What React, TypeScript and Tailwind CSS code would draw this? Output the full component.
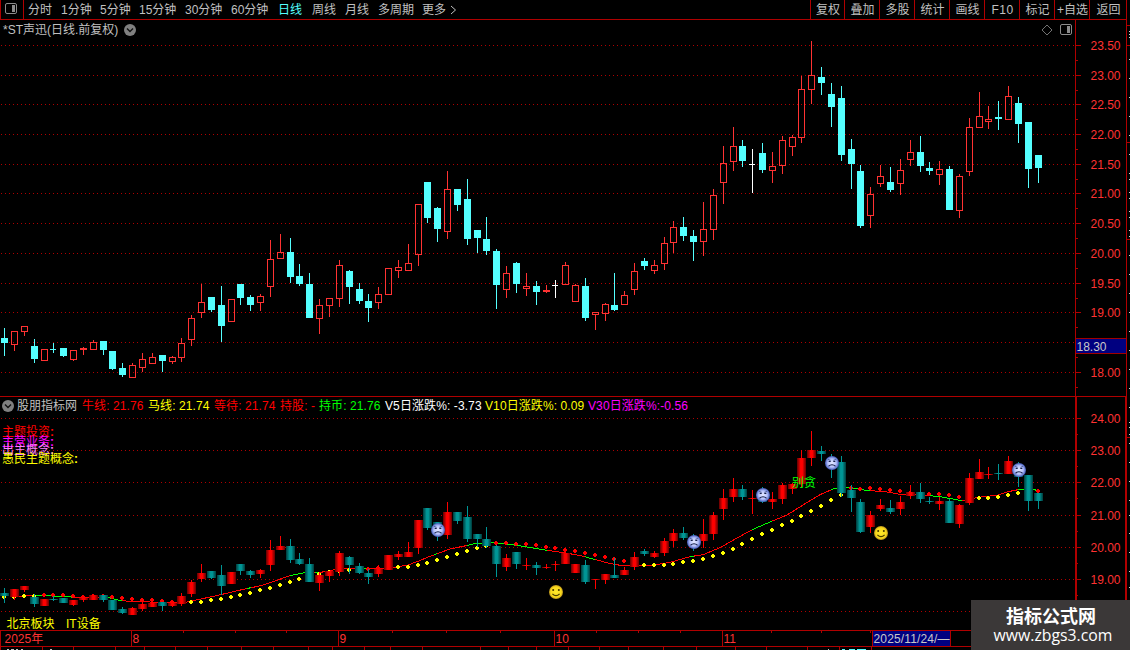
import { clsx } from "clsx";

type Kind = "r" | "c" | "w";
// x, high, body top, body bottom, low, kind
type Candle = [number, number, number, number, number, Kind];

const candles: Candle[] = [
    [4, 328, 338, 343, 356, "c"], [14, 331, 331, 345, 351, "r"], [24, 326, 326, 332, 336, "r"],
    [34, 339, 346, 359, 363, "c"], [44, 349, 349, 361, 361, "r"], [53, 343, 349, 350, 353, "c"],
    [63, 348, 348, 356, 357, "c"], [73, 350, 350, 360, 361, "r"], [83, 347, 348, 350, 355, "r"],
    [93, 340, 342, 350, 350, "r"], [103, 341, 341, 350, 355, "c"], [112, 351, 351, 369, 370, "c"],
    [122, 363, 368, 375, 377, "c"], [132, 363, 365, 378, 378, "r"], [142, 353, 359, 368, 372, "r"],
    [152, 353, 357, 364, 364, "r"], [162, 355, 355, 361, 372, "c"], [172, 356, 357, 362, 364, "r"],
    [181, 338, 343, 358, 362, "r"], [191, 315, 318, 340, 346, "r"], [201, 284, 302, 313, 318, "r"],
    [211, 297, 297, 310, 312, "c"], [221, 286, 305, 326, 342, "c"], [231, 299, 299, 322, 322, "r"],
    [240, 284, 284, 298, 305, "c"], [250, 295, 297, 305, 311, "c"], [260, 294, 296, 303, 311, "r"],
    [270, 240, 259, 287, 297, "r"], [280, 234, 252, 259, 259, "r"], [290, 238, 252, 277, 283, "c"],
    [299, 264, 276, 284, 286, "c"], [309, 273, 284, 318, 318, "c"], [319, 299, 305, 319, 334, "r"],
    [329, 298, 298, 306, 317, "r"], [339, 260, 265, 299, 307, "r"], [349, 270, 271, 287, 304, "c"],
    [359, 283, 289, 301, 304, "c"], [368, 294, 301, 308, 322, "c"], [378, 287, 294, 303, 309, "r"],
    [388, 268, 268, 295, 295, "r"], [398, 260, 267, 271, 278, "r"], [408, 244, 263, 271, 271, "r"],
    [418, 204, 204, 255, 266, "r"], [427, 182, 182, 218, 223, "c"], [437, 207, 208, 229, 242, "c"],
    [447, 171, 189, 232, 239, "r"], [457, 189, 189, 205, 211, "c"], [467, 179, 199, 239, 245, "c"],
    [477, 230, 230, 238, 253, "c"], [486, 217, 239, 251, 255, "c"], [496, 249, 251, 285, 309, "c"],
    [506, 266, 273, 290, 298, "r"], [516, 262, 263, 284, 293, "c"], [526, 273, 286, 289, 296, "r"],
    [536, 281, 286, 292, 305, "c"], [546, 285, 290, 292, 293, "r"], [555, 280, 285, 286, 298, "w"],
    [565, 262, 265, 285, 285, "r"], [575, 284, 285, 302, 302, "r"], [585, 278, 286, 318, 321, "c"],
    [595, 312, 312, 315, 330, "r"], [605, 303, 304, 314, 321, "r"], [614, 273, 305, 310, 311, "c"],
    [624, 291, 295, 305, 305, "r"], [634, 263, 271, 290, 295, "r"], [644, 258, 261, 266, 270, "c"],
    [654, 260, 265, 271, 274, "r"], [664, 237, 243, 264, 270, "r"], [673, 221, 227, 243, 253, "r"],
    [683, 217, 227, 236, 241, "c"], [693, 230, 236, 242, 261, "c"], [703, 202, 229, 242, 256, "r"],
    [713, 189, 195, 230, 240, "r"], [723, 146, 163, 183, 204, "r"], [733, 127, 146, 162, 171, "r"],
    [742, 140, 146, 161, 167, "c"], [752, 149, 164, 165, 193, "w"], [762, 143, 153, 170, 173, "c"],
    [772, 152, 166, 171, 183, "r"], [782, 136, 140, 166, 174, "r"], [792, 135, 137, 147, 156, "r"],
    [801, 76, 89, 138, 143, "r"], [811, 41, 75, 90, 104, "r"], [821, 67, 77, 83, 95, "c"],
    [831, 83, 94, 107, 127, "c"], [841, 86, 98, 155, 161, "c"], [851, 139, 149, 164, 189, "c"],
    [860, 165, 171, 226, 228, "c"], [870, 187, 194, 216, 228, "r"], [880, 165, 176, 184, 187, "r"],
    [890, 167, 182, 190, 192, "c"], [900, 159, 170, 184, 195, "r"], [910, 140, 152, 160, 166, "r"],
    [920, 136, 152, 166, 172, "c"], [929, 162, 168, 171, 175, "c"], [939, 161, 169, 175, 185, "r"],
    [949, 166, 169, 210, 210, "c"], [959, 174, 176, 211, 218, "r"], [969, 118, 127, 172, 176, "r"],
    [979, 92, 116, 128, 128, "r"], [988, 106, 119, 122, 129, "r"], [998, 101, 117, 119, 130, "c"],
    [1008, 86, 96, 120, 120, "r"], [1018, 97, 103, 124, 143, "c"], [1028, 122, 122, 169, 188, "c"],
    [1038, 155, 155, 168, 183, "c"],
];

const curve: [number, number][] = [
    [10, 596.5], [35, 595.5], [68, 596.5], [74, 597.5], [97, 597.5], [108, 597.5], [118, 600], [130, 601.5],
    [150, 602], [165, 602.5], [185, 602.5], [196, 600], [215, 596], [230, 592.5], [247, 588.5], [262, 585.5],
    [275, 581], [290, 575.5], [303, 573], [320, 572.5], [333, 570], [345, 568.6], [390, 568.5], [402, 566],
    [408, 565], [420, 560.5], [427, 557.5], [435, 554.5], [450, 549], [457, 547.5], [467, 545.5], [475, 543.5],
    [483, 543], [492, 542.7], [507, 544], [520, 545.8], [533, 548], [547, 550.3], [563, 552.5], [580, 555.5],
    [595, 559.5], [608, 563], [620, 565.3], [653, 565.3], [670, 562.3], [690, 556.7], [703, 554.7], [720, 547.7],
    [737, 538], [753, 529.3], [770, 522], [787, 515], [803, 505], [820, 494.7], [833, 489], [847, 487.5],
    [857, 488.3], [867, 490.7], [883, 491.3], [900, 494.3], [923, 495], [940, 496.7], [960, 500.3], [965, 500.3],
    [978, 497.3], [997, 495.3], [1008, 491.7], [1020, 489.3], [1033, 489.3], [1038, 490.7],
];

const greenSpans = [
    [34, 73], [108, 122], [247, 251], [290, 305], [315, 320], [364, 368], [434, 437], [467, 547],
    [585, 595], [690, 694], [752, 772], [831, 870], [930, 962], [1018, 1038],
];

// one dot per candle: negative values are red dots, positive are yellow
const dots = [
    597, 597, 596, 596, -595, -595, -595, -596, -597, -596, -596, -597, -598, -599, -600, -600, -601, -602, -602,
    602, 602, 600, 599, 597, 595, 593, 590, 588, 585, 582, 579, 576, 574, 572, 571, 570, -569, -569, -568, -568,
    567, 567, 565, 563, 560, 557, 554, 551, 548, 546, -543, -543, -544, -544, -545, -547, -548, -550, -551, -553,
    -555, -557, -559, -561, -562, 565, 565, 565, 564, 562, 561, 559, 556, 553, 549, 544, 539, 534, 530, 525, 521,
    516, 511, 506, 500, 495, -488, -489, -488, -489, -490, -491, -493, -494, -494, -494, -495, -497, 499, 498, 498,
    497, 495, 493, -490, -491,
];

const upperScale: [number, string][] = [
    [45, "23.50"], [75, "23.00"], [104, "22.50"], [134, "22.00"], [164, "21.50"], [193, "21.00"],
    [223, "20.50"], [253, "20.00"], [283, "19.50"], [312, "19.00"], [342, ""], [372, "18.00"],
];
const lowerScale: [number, string][] = [
    [418, "24.00"], [450, "23.00"], [482, "22.00"], [515, "21.00"], [547, "20.00"], [579, "19.00"], [611, ""],
];

const periods = [
    ["分时", "w-[33px]"], ["1分钟", "w-[39px]"], ["5分钟", "w-[39px]"], ["15分钟", "w-[46px]"],
    ["30分钟", "w-[46px]"], ["60分钟", "w-[47px]"], ["日线", "w-[34px]"], ["周线", "w-[33px]"],
    ["月线", "w-[33px]"], ["多周期", "w-[44px]"], ["更多", "w-[28px]"],
];

const actions = [
    ["复权", "w-[34px]"], ["叠加", "w-[35px]"], ["多股", "w-[35px]"], ["统计", "w-[35px]"], ["画线", "w-[35px]"],
    ["F10", "w-[35px] tracking-[0.5px]"], ["标记", "w-[35px]"], ["+自选", "w-[35px]"], ["返回", "w-[37px]"],
];

const readings = [
    ["牛线: 21.76", "w-[66px] text-[#ff0000]"],
    ["马线: 21.74", "w-[66px] text-[#ffff00]"],
    ["等待: 21.74", "w-[66px] text-[#ff0000]"],
    ["持股: -", "w-[39px] text-[#ff0000]"],
    ["持币: 21.76", "w-[66px] text-[#00ff00]"],
    ["V5日涨跌%: -3.73", "w-[100px] text-white"],
    ["V10日涨跌%: 0.09", "w-[103px] text-[#ffff00]"],
    ["V30日涨跌%:-0.56", "w-[110px] text-[#ff00ff]"],
];

// themes stacked on top of each other in the indicator panel: baseline, colour, text
const themes: [number, string, string][] = [
    [436, "#ff0000", "主题投资"],
    [446, "#ff00ff", "主营业务"],
    [454, "#ff80ff", "出主概念"],
    [463, "#ffff00", "愚民主题概念"],
];

// price panel y -> indicator panel y
const toLower = (y: number) => Math.round(433.6 + (y - 45) * 0.544);

function curveY(x: number) {
    for (let i = 1; i < curve.length; i++) {
        const [x0, y0] = curve[i - 1];
        const [x1, y1] = curve[i];
        if (x <= x1) return y0 + ((y1 - y0) * (x - x0)) / (x1 - x0);
    }
    return curve[curve.length - 1][1];
}

function spanPoints(from: number, to: number) {
    const inner = curve.filter(([x]) => x > from && x < to);
    return [[from, curveY(from)], ...inner, [to, curveY(to)]].map((p) => p.join(",")).join(" ");
}

function GridLines({ rows }: { rows: [number, string][] }) {
    return (
        <>
            {rows.map(([y]) => (
                <line key={y} x1={1} x2={1075} y1={y + 0.5} y2={y + 0.5} stroke="#b00000" strokeDasharray="1 3" />
            ))}
        </>
    );
}

function PanelIcon() {
    return (
        <svg width="12" height="11" viewBox="0 0 12 11" className="shrink-0">
            <rect x="0.5" y="0.5" width="11" height="10" rx="1.5" fill="none" stroke="#8c8c8c" />
            <rect x="7" y="2" width="3" height="7" fill="#8c8c8c" />
        </svg>
    );
}

function RoundChevron() {
    return (
        <svg width="12" height="12" viewBox="0 0 12 12" className="shrink-0">
            <circle cx="6" cy="6" r="6" fill="#808080" />
            <path d="M3 4.5 L6 7.5 L9 4.5" fill="none" stroke="#111" strokeWidth="1.4" />
        </svg>
    );
}

function PriceChart() {
    const colors = { r: "#ff3232", c: "#54ffff", w: "#ffffff" };
    return (
        <svg width="1075" height="356" viewBox="0 40 1075 356" shapeRendering="crispEdges" className="block">
            <GridLines rows={upperScale} />
            {candles.map(([x, hi, top, bot, lo, kind]) => (
                <g key={x} fill={colors[kind]}>
                    {hi < top && <rect x={x} y={hi} width={1} height={top - hi} />}
                    {lo > bot && <rect x={x} y={bot} width={1} height={lo - bot} />}
                    {kind === "r" && bot - top > 2 ? (
                        <rect x={x - 2.5} y={top + 0.5} width={6} height={bot - top - 1} fill="none" stroke="#ff3232" />
                    ) : (
                        <rect x={x - 3} y={top} width={kind === "w" || bot - top === 1 ? 6 : 7} height={bot - top} />
                    )}
                </g>
            ))}
        </svg>
    );
}

function Sad({ x, y }: { x: number; y: number }) {
    return (
        <g transform={`translate(${x} ${y})`}>
            <circle r="7" fill="url(#sad)" />
            <path d="M-4 -3.6 L-1.5 -2.8 M4 -3.6 L1.5 -2.8" stroke="#3a4a80" strokeWidth="0.7" />
            <path d="M-3.3 -1.6 h2 M1.3 -1.6 h2" stroke="#16204a" strokeWidth="1.4" />
            <path d="M-3.5 3.2 Q0 0.4 3.5 3.2" fill="none" stroke="#16204a" strokeWidth="1.1" />
        </g>
    );
}

function Happy({ x, y }: { x: number; y: number }) {
    return (
        <g transform={`translate(${x} ${y})`}>
            <circle r="7" fill="url(#happy)" />
            <path d="M-2.8 -3 v2 M2.8 -3 v2" stroke="#5a4a00" strokeWidth="1.7" />
            <path d="M-3.6 1.8 Q0 5.6 3.6 1.8" fill="none" stroke="#4a3c00" strokeWidth="1.2" />
        </g>
    );
}

function IndicatorChart() {
    return (
        <svg width="1075" height="216" viewBox="0 414 1075 216" className="block text-[12px]">
            <defs>
                <linearGradient id="red">
                    <stop offset="0" stopColor="#600000" />
                    <stop offset="0.4" stopColor="#ff0000" />
                    <stop offset="0.6" stopColor="#ff0000" />
                    <stop offset="1" stopColor="#600000" />
                </linearGradient>
                <linearGradient id="teal">
                    <stop offset="0" stopColor="#003a3a" />
                    <stop offset="0.4" stopColor="#009696" />
                    <stop offset="0.6" stopColor="#009696" />
                    <stop offset="1" stopColor="#003a3a" />
                </linearGradient>
                <radialGradient id="sad">
                    <stop offset="0" stopColor="#e4e8ff" />
                    <stop offset="0.6" stopColor="#b4c0fc" />
                    <stop offset="1" stopColor="#4058b8" />
                </radialGradient>
                <radialGradient id="happy">
                    <stop offset="0" stopColor="#ffe82a" />
                    <stop offset="0.75" stopColor="#f8d81c" />
                    <stop offset="1" stopColor="#b8901c" />
                </radialGradient>
            </defs>
            <g shapeRendering="crispEdges">
                <GridLines rows={lowerScale} />
                <polyline points={spanPoints(10, 1038)} fill="none" stroke="#ff0000" />
                {greenSpans.map(([a, b]) => (
                    <polyline key={a} points={spanPoints(a, b)} fill="none" stroke="#00ff00" />
                ))}
                {candles.map(([x], i) => {
                    const y = Math.abs(dots[i]);
                    return (
                        <path
                            key={x}
                            d={`M${x - 1} ${y - 2}h2v1h1v2h-1v1h-2v-1h-1v-2h1z`}
                            fill={dots[i] < 0 ? "#ff0000" : "#ffff00"}
                        />
                    );
                })}
                {candles.map(([x, hi, top, bot, lo, kind]) => {
                    const red = kind !== "c";
                    const y = toLower(top);
                    return (
                        <g key={x}>
                            <rect x={x} y={toLower(hi)} width={1} height={toLower(lo) - toLower(hi)} fill={red ? "#ff0000" : "#009696"} />
                            <rect x={x - 4} y={y} width={9} height={Math.max(1, toLower(bot) - y)} fill={red ? "url(#red)" : "url(#teal)"} />
                        </g>
                    );
                })}
            </g>
            <Sad x={438} y={530} />
            <Sad x={694} y={542} />
            <Sad x={763} y={495} />
            <Sad x={832} y={463} />
            <Sad x={1019} y={470} />
            <Happy x={556} y={592} />
            <Happy x={881} y={533} />
            <text x="792" y="486.5" fill="#00ff00">别贪</text>
            {themes.map(([y, color, name]) => (
                <text key={name} x="2" y={y} fill={color}>
                    {name}
                    <tspan className="font-bold">:</tspan>
                </text>
            ))}
            <text x="6.5" y="627.5" fill="#ffff00">北京板块</text>
            <text x="66" y="627.5" fill="#ffff00">IT设备</text>
        </svg>
    );
}

function Scale({ rows, from, height, thick }: { rows: [number, string][]; from: number; height: number; thick?: boolean }) {
    const step = thick ? 16 : 15;
    return (
        <svg width="52" height={height} viewBox={`1075 ${from} 52 ${height}`} className="block text-[12px]">
            <g fill="#b00000" shapeRendering="crispEdges">
                <rect x="1075" y={from} width={thick ? 2 : 1} height={height} />
                <rect x={thick ? 1125 : 1126} y={from} width={thick ? 2 : 1} height={height} />
                {rows.map(([y]) => (
                    <g key={y}>
                        <rect x="1076" y={y} width="5" height="1" />
                        <rect x="1076" y={y + step} width="2" height="1" />
                    </g>
                ))}
            </g>
            {rows.map(([y, label]) => (
                <text key={y} x="1090.5" y={y + 5} fill="#ff3232" textLength={label ? 30 : undefined}>{label}</text>
            ))}
            {!thick && (
                <>
                    <rect x="1076" y="338" width="50" height="16" fill="#000080" />
                    <path d="M1076 338.5 H1126 M1076 353.5 H1126" stroke="#a00000" />
                    <text x="1076.5" y="350.5" fill="#c8c8c8" textLength="30">18.30</text>
                </>
            )}
        </svg>
    );
}

function EdgeStrip() {
    const marks = [31, 34, 37, 59, 78, 97, 116, 135, 154, 173, 179, 192, 198, 211, 217, 230, 236];
    return (
        <svg width="3" height="630" viewBox="1127 20 3 630" shapeRendering="crispEdges" className="block">
            {[25, 45, 142, 239, 437].map((y) => (
                <rect key={y} x="1127" y={y} width="3" height="1" fill="#b00000" />
            ))}
            {marks.map((y) => (
                <rect key={y} x="1129" y={y} width="1" height="1" fill="#d0d0d0" />
            ))}
            {[255, 274, 293, 312, 331, 350, 369, 388, 407].map((y) => (
                <rect key={y} x="1129" y={y} width="1" height="1" fill="#d0d0d0" />
            ))}
            {[422, 427, 434, 443, 462, 481, 500, 515, 533, 552, 571, 587].map((y) => (
                <rect key={y} x="1129" y={y} width="1" height="1" fill="#d0d0d0" />
            ))}
        </svg>
    );
}

function TimeAxis() {
    const months: [number, string][] = [[131, "8"], [338, "9"], [554, "10"], [722, "11"]];
    const bottom = [
        0, 42, 73, 115, 144, 175, 207, 241, 273, 308, 332, 364, 390, 422, 480, 508, 536, 568, 599, 628, 663, 696,
        735, 766, 807, 839, 871,
    ];
    return (
        <svg width="1127" height="20" viewBox="0 630 1127 20" className="block text-[12px]">
            <g fill="#b00000" shapeRendering="crispEdges">
                <rect x="0" y="630" width="1127" height="1" />
                <rect x="0" y="646" width="1127" height="1" />
                <rect x="0" y="630" width="1" height="17" />
                {months.map(([x]) => (
                    <rect key={x} x={x} y="630" width="1" height="17" />
                ))}
                {[183, 235, 286, 392, 446, 500, 596, 638, 680, 771, 821, 870].map((x) => (
                    <rect key={x} x={x} y="631" width="1" height="2" />
                ))}
                {bottom.map((x) => (
                    <rect key={x} x={x} y="647" width="1" height="3" />
                ))}
                <rect x="872" y="630" width="79" height="17" />
            </g>
            <rect x="873" y="631" width="77" height="15" fill="#000080" />
            <text x="873.5" y="642.5" fill="#c8c8c8" textLength="76">2025/11/24/—</text>
            <text x="4.5" y="643" fill="#ff3232">2025年</text>
            {months.map(([x, label]) => (
                <text key={x} x={x + 1.5} y="643" fill="#ff3232">{label}</text>
            ))}
            <g shapeRendering="crispEdges" fill="#c0c0c0">
                <path d="M7 649h2v1h-2zM11 649h3v1h-3zM16 649h2v1h-2zM21 649h2v1h-2zM50 649h2v1h-2zM828 649h1v1h-1z" />
                <path d="M842 649h3v1h-3zM849 649h6v1h-6zM857 649h9v1h-9z" fill="#54ffff" />
            </g>
        </svg>
    );
}

export default function App() {
    return (
        <div className="relative flex h-[650px] w-[1130px] flex-col overflow-hidden bg-black font-['Liberation_Sans','Noto_Sans_CJK_SC',sans-serif] text-[12px] leading-none whitespace-nowrap text-[#c0c0c0]">
            <header className="flex h-[20px] shrink-0">
                <div className="flex w-[1127px] border-r border-b border-[#b00000]">
                    <div className="flex w-[24px] items-center border-x border-[#b00000] pb-[2px] pl-[4px]">
                        <PanelIcon />
                    </div>
                    <nav className="flex flex-1 items-center pl-[4px]">
                        {periods.map(([name, width]) => (
                            <span key={name} className={clsx("shrink-0", width, name === "日线" && "text-[#54ffff]")}>
                                {name}
                            </span>
                        ))}
                        <svg width="7" height="10" viewBox="0 0 7 10" fill="none" stroke="#c0c0c0">
                            <path d="M1 1 L5.5 5 L1 9" />
                        </svg>
                    </nav>
                    <div className="flex">
                        {actions.map(([name, width]) => (
                            <span key={name} className={clsx("flex shrink-0 items-center justify-center border-l border-[#b00000] pl-px", width)}>
                                {name}
                            </span>
                        ))}
                    </div>
                </div>
            </header>
            <div className="flex flex-1">
                <main className="w-[1127px]">
                    <section className="flex h-[376px]">
                        <div className="w-[1075px]">
                            <div className="flex h-[20px] items-center pr-[3px] pb-px pl-[3px]">
                                <span className="w-[121px]">*ST声迅(日线.前复权)</span>
                                <RoundChevron />
                                <svg width="12" height="12" viewBox="0 0 12 12" className="ml-auto mr-[7px]">
                                    <path d="M6 1 L11 6 L6 11 L1 6 Z" fill="none" stroke="#808080" strokeWidth="0.9" />
                                </svg>
                                <PanelIcon />
                            </div>
                            <PriceChart />
                        </div>
                        <Scale rows={upperScale} from={20} height={376} />
                    </section>
                    <section className="flex h-[234px] border-t border-[#b00000]">
                        <div className="w-[1075px]">
                            <div className="flex h-[17px] items-center pl-[2px]">
                                <RoundChevron />
                                <span className="ml-[3px] w-[65px]">股朋指标网</span>
                                {readings.map(([text, style]) => (
                                    <span key={text} className={clsx("shrink-0 tracking-[0.1px]", style)}>{text}</span>
                                ))}
                            </div>
                            <IndicatorChart />
                        </div>
                        <Scale rows={lowerScale} from={397} height={233} thick />
                    </section>
                    <TimeAxis />
                </main>
                <EdgeStrip />
            </div>
            <div className="absolute right-0 bottom-0 flex h-[50px] w-[159px] flex-col items-center bg-[#3b3838] pt-[5px] pl-[3px] text-white">
                <span className="mr-[2px] font-['Noto_Sans_CJK_SC',sans-serif] text-[18px] leading-[20px] font-bold">指标公式网</span>
                <span className="pl-[2px] font-['Open_Sans',sans-serif] text-[15.8px] leading-[20px]">www.zbgs3.com</span>
            </div>
        </div>
    );
}
